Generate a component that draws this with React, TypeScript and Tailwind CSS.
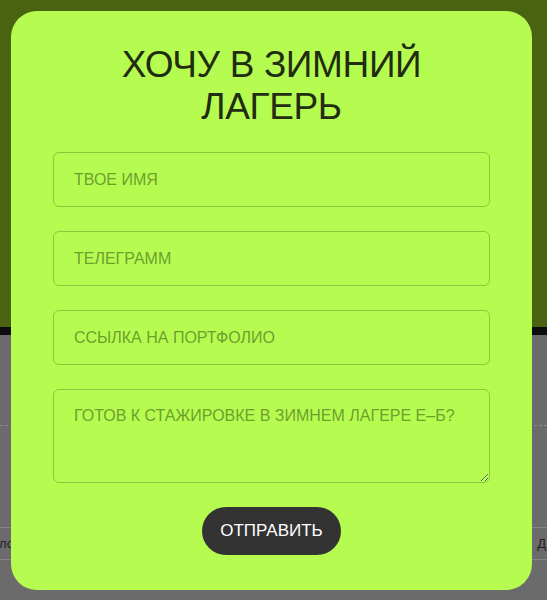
import React from 'react'

const font = { fontFamily: '"Liberation Sans", Arial, sans-serif' }

export default function App() {
  return (
    <div className="relative h-[600px] w-full overflow-hidden bg-[#6b6b6b]" style={font}>

      {/* Page behind the overlay */}
      <div className="flex h-full flex-col">
        <div className="h-[327px] shrink-0 bg-[#4a6310]" />
        <div className="h-[8px] shrink-0 bg-[#0d0d0d]" />
        <div className="flex flex-1 flex-col">
          <div className="mt-[90px] border-t border-dashed border-[#8a8a8a]" />
          <div className="mt-[101px] flex h-[33px] items-center justify-between border-y border-[#868686] text-[13px] text-[#1e1e1e]">
            <span className="-ml-[1px]">ло</span>
            <span className="mr-[1px]">Д</span>
          </div>
        </div>
      </div>

      {/* Modal */}
      <div className="absolute left-[11px] top-[11px] flex w-[521px] flex-col rounded-[26px] bg-[#b6fc50] px-[42px] pb-[35px] pt-[33px]">
        <h2 className="text-center text-[37px] font-normal uppercase leading-[42px] tracking-[-0.01em] text-[#222c10]">
          Хочу в зимний<br />лагерь
        </h2>

        <form className="mt-[24px] flex flex-col gap-[24px]" onSubmit={e => e.preventDefault()}>
          <input
            placeholder="ТВОЕ ИМЯ"
            className="h-[55px] w-full rounded-[6px] border border-[#8cc83e] bg-transparent px-5 text-[16px] text-[#24300f] outline-none placeholder:text-[#6e9f2d]"
          />
          <input
            placeholder="ТЕЛЕГРАММ"
            className="h-[55px] w-full rounded-[6px] border border-[#8cc83e] bg-transparent px-5 text-[16px] text-[#24300f] outline-none placeholder:text-[#6e9f2d]"
          />
          <input
            placeholder="ССЫЛКА НА ПОРТФОЛИО"
            className="h-[55px] w-full rounded-[6px] border border-[#8cc83e] bg-transparent px-5 text-[16px] text-[#24300f] outline-none placeholder:text-[#6e9f2d]"
          />
          <textarea
            placeholder="ГОТОВ К СТАЖИРОВКЕ В ЗИМНЕМ ЛАГЕРЕ Е–Б?"
            className="block h-[94px] w-full rounded-[6px] border border-[#8cc83e] bg-transparent px-5 pt-[14px] text-[16px] leading-[24px] text-[#24300f] outline-none placeholder:text-[#6e9f2d]"
          />
          <div className="flex justify-center">
            <button
              type="submit"
              className="h-[48px] rounded-full bg-[#333333] px-[18px] text-[17px] text-white"
            >
              ОТПРАВИТЬ
            </button>
          </div>
        </form>
      </div>
    </div>
  )
}
